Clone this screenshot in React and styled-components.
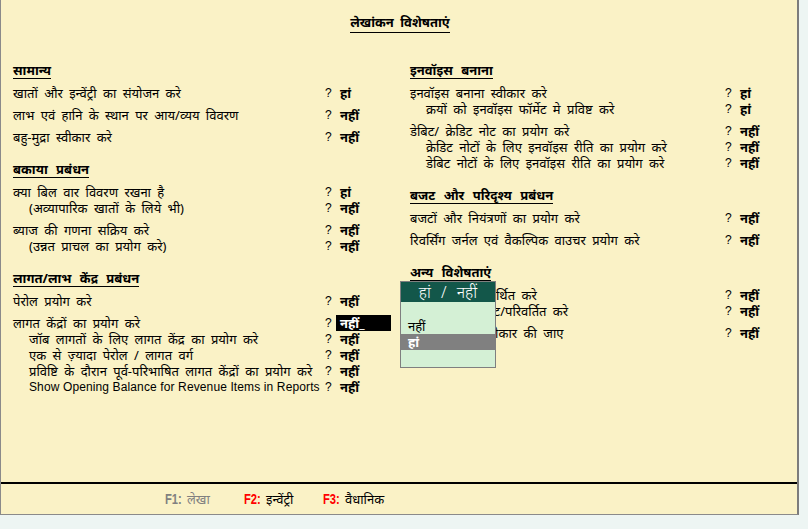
import React from 'react'
import styled, { createGlobalStyle } from 'styled-components'

const Global = createGlobalStyle`
  body {
    margin: 0;
    background: #edf5f3;
    font-family: "Noto Sans", "DejaVu Sans", "Liberation Sans", sans-serif;
    color: #000;
  }
`

const Panel = styled.div`
  position: relative;
  box-sizing: border-box;
  width: 799px;
  height: 515px;
  background: #faf2c6;
  border-left: 1px solid #8a8a8a;
  border-right: 2px solid #7c7c7c;
  border-bottom: 1px solid #8a8a8a;
  display: flex;
  flex-direction: column;
`

const TitleBar = styled.div`
  height: 46px;
  display: flex;
  justify-content: center;
  padding-top: 13px;
  padding-left: 2px;
  box-sizing: border-box;
`

const Title = styled.div`
  font-size: 13px;
  font-weight: bold;
  line-height: 18px;
  height: 19px;
  border-bottom: 1px solid #000;
  word-spacing: 3px;
`

const Columns = styled.div`
  flex: 1;
  display: grid;
  grid-template-columns: 378px 381px;
  column-gap: 19px;
  padding-left: 12px;
  align-content: start;
`

const Column = styled.div`
  display: flex;
  flex-direction: column;
`

const Heading = styled.div`
  margin-top: 15px;
  height: 18px;
  display: flex;
`

const HeadingText = styled.span`
  font-size: 13px;
  font-weight: bold;
  line-height: 18px;
  border-bottom: 1px solid #000;
  word-spacing: 5px;
`

const Group = styled.div`
  margin-top: 6px;
  display: flex;
  flex-direction: column;
`

const Row = styled.div`
  display: grid;
  grid-template-columns: 1fr 11px 55px;
  height: 16px;
  line-height: 16px;
  padding-left: ${p => (p.$indent ? '16px' : '0')};
  white-space: nowrap;
`

const Label = styled.span`
  font-family: ${p => (p.$latin ? '"Liberation Sans", sans-serif' : 'inherit')};
  font-size: ${p => (p.$latin ? '12px' : '13px')};
  letter-spacing: ${p => (p.$latin ? '0.12px' : 'normal')};
  word-spacing: ${p => (p.$latin ? '0' : '3px')};
`

const Ask = styled.span`
  font-family: "Liberation Sans", sans-serif;
  font-size: 12px;
`

const Value = styled.span`
  font-weight: bold;
  font-size: 13px;
  padding-left: 4px;
  background: ${p => (p.$active ? '#000' : 'transparent')};
  color: ${p => (p.$active ? '#fff' : '#000')};
`

const Footer = styled.div`
  height: 32px;
  border-top: 2px solid #000;
  box-sizing: border-box;
  display: flex;
  align-items: center;
  padding-left: 164px;
`

const Key = styled.div`
  width: 79px;
  display: flex;
  align-items: baseline;
  gap: 4px;
`

const KeyName = styled.span`
  font-family: "Liberation Sans", sans-serif;
  font-size: 14px;
  font-weight: bold;
  transform: scaleX(0.8);
  transform-origin: left;
  margin-right: -3px;
  color: ${p => (p.$off ? '#808080' : '#ff0000')};
`

const KeyLabel = styled.span`
  font-size: 13px;
  color: ${p => (p.$off ? '#808080' : '#000')};
`

const Popup = styled.div`
  position: absolute;
  left: 399px;
  top: 281px;
  width: 96px;
  height: 87px;
  box-sizing: border-box;
  border: 1px solid #7f7f7f;
  background: #d4f0d5;
  display: flex;
  flex-direction: column;
`

const PopupHead = styled.div`
  height: 20px;
  background: #13574a;
  color: #fff;
  font-size: 16px;
  font-weight: 300;
  line-height: 20px;
  text-align: center;
  word-spacing: 6px;
`

const PopupList = styled.div`
  margin-top: 16px;
  display: flex;
  flex-direction: column;
`

const PopupItem = styled.div`
  height: 16px;
  line-height: 16px;
  font-size: 13px;
  padding-left: 7px;
  background: ${p => (p.$sel ? '#808080' : 'transparent')};
  color: ${p => (p.$sel ? '#fff' : '#000')};
  font-weight: ${p => (p.$sel ? 'bold' : 'normal')};
`

const left = [
  {
    title: 'सामान्य',
    groups: [
      [{ label: 'खातों और इन्वेंट्री का संयोजन करे', value: 'हां' }],
      [{ label: 'लाभ एवं हानि के स्थान पर आय/व्यय विवरण', value: 'नहीं' }],
      [{ label: 'बहु-मुद्रा स्वीकार करे', value: 'नहीं' }],
    ],
  },
  {
    title: 'बकाया प्रबंधन',
    groups: [
      [
        { label: 'क्या बिल वार विवरण रखना है', value: 'हां' },
        { label: '(अव्यापारिक खातों के लिये भी)', value: 'नहीं', indent: true },
      ],
      [
        { label: 'ब्याज की गणना सक्रिय करे', value: 'नहीं' },
        { label: '(उन्नत प्राचल का प्रयोग करे)', value: 'नहीं', indent: true },
      ],
    ],
  },
  {
    title: 'लागत/लाभ केंद्र प्रबंधन',
    groups: [
      [{ label: 'पेरोल प्रयोग करे', value: 'नहीं' }],
      [
        { label: 'लागत केंद्रों का प्रयोग करे', value: 'नहीं_', active: true },
        { label: 'जॉब लागतों के लिए लागत केंद्र का प्रयोग करे', value: 'नहीं', indent: true },
        { label: 'एक से ज़्यादा पेरोल / लागत वर्ग', value: 'नहीं', indent: true },
        { label: 'प्रविष्टि के दौरान पूर्व-परिभाषित लागत केंद्रों का प्रयोग करे', value: 'नहीं', indent: true },
        { label: 'Show Opening Balance for Revenue Items in Reports', value: 'नहीं', indent: true, latin: true },
      ],
    ],
  },
]

const right = [
  {
    title: 'इनवॉइस बनाना',
    groups: [
      [
        { label: 'इनवॉइस बनाना स्वीकार करे', value: 'हां' },
        { label: 'क्रयों को इनवॉइस फॉर्मेट मे प्रविष्ट करे', value: 'हां', indent: true },
      ],
      [
        { label: 'डेबिट/ क्रेडिट नोट का प्रयोग करे', value: 'नहीं' },
        { label: 'क्रेडिट नोटों के लिए इनवॉइस रीति का प्रयोग करे', value: 'नहीं', indent: true },
        { label: 'डेबिट नोटों के लिए इनवॉइस रीति का प्रयोग करे', value: 'नहीं', indent: true },
      ],
    ],
  },
  {
    title: 'बजट और परिदृश्य प्रबंधन',
    groups: [
      [{ label: 'बजटों और नियंत्रणों का प्रयोग करे', value: 'नहीं' }],
      [{ label: 'रिवर्सिंग जर्नल एवं वैकल्पिक वाउचर प्रयोग करे', value: 'नहीं' }],
    ],
  },
  {
    title: 'अन्य विशेषताएं',
    groups: [
      [
        { label: 'एकाधिक पते समर्थित करे', value: 'नहीं' },
        { label: 'कंपनी विन्यास सेट/परिवर्तित करे', value: 'नहीं' },
      ],
      [{ label: 'शून्य प्रविष्टियां स्वीकार की जाए', value: 'नहीं' }],
    ],
  },
]

const Section = ({ title, groups }) => (
  <>
    <Heading>
      <HeadingText>{title}</HeadingText>
    </Heading>
    {groups.map((rows, gi) => (
      <Group key={gi}>
        {rows.map(r => (
          <Row key={r.label} $indent={r.indent}>
            <Label $latin={r.latin}>{r.label}</Label>
            <Ask>?</Ask>
            <Value $active={r.active}>{r.value}</Value>
          </Row>
        ))}
      </Group>
    ))}
  </>
)

export default function App() {
  return (
    <>
      <Global />
      <Panel>
        <TitleBar>
          <Title>लेखांकन विशेषताएं</Title>
        </TitleBar>
        <Columns>
          <Column>
            {left.map(s => <Section key={s.title} {...s} />)}
          </Column>
          <Column>
            {right.map(s => <Section key={s.title} {...s} />)}
          </Column>
        </Columns>
        <Footer>
          <Key>
            <KeyName $off>F1:</KeyName>
            <KeyLabel $off>लेखा</KeyLabel>
          </Key>
          <Key>
            <KeyName>F2:</KeyName>
            <KeyLabel>इन्वेंट्री</KeyLabel>
          </Key>
          <Key>
            <KeyName>F3:</KeyName>
            <KeyLabel>वैधानिक</KeyLabel>
          </Key>
        </Footer>
        <Popup>
          <PopupHead>हां / नहीं</PopupHead>
          <PopupList>
            <PopupItem>नहीं</PopupItem>
            <PopupItem $sel>हां</PopupItem>
          </PopupList>
        </Popup>
      </Panel>
    </>
  )
}
